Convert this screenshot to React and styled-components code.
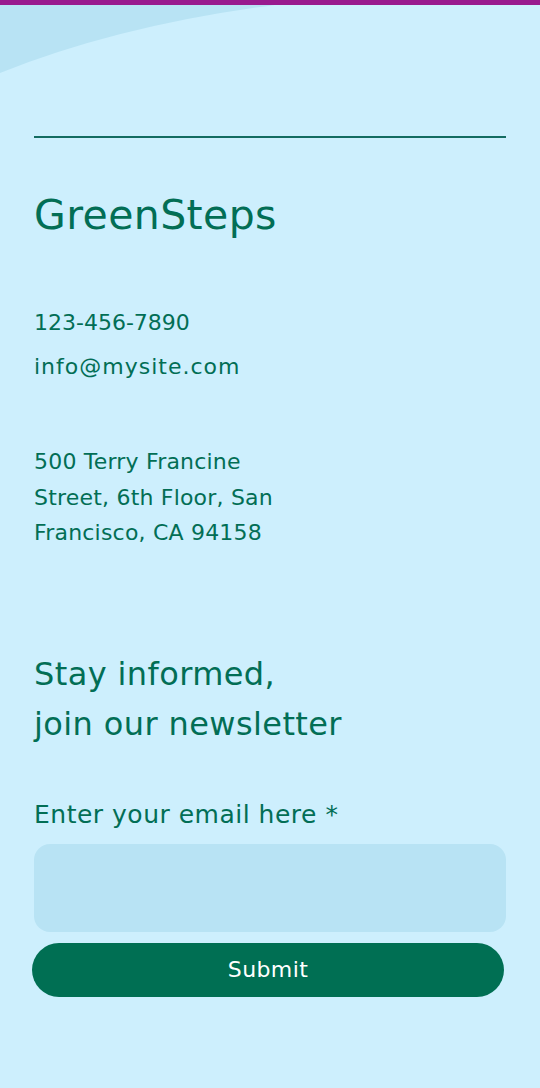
import React from 'react';
import styled, { createGlobalStyle } from 'styled-components';

const Global = createGlobalStyle`
  html, body {
    margin: 0;
    padding: 0;
    background: #cdeffd;
  }
  body {
    font-family: 'DejaVu Sans', 'Noto Sans', sans-serif;
  }
`;

const Page = styled.div`
  position: relative;
  min-height: 1088px;
  background: #cdeffd;
  border-top: 5px solid #991a8e;
  box-sizing: border-box;
  overflow: hidden;
`;

const Swoosh = styled.svg`
  position: absolute;
  top: 0;
  left: 0;
  width: 280px;
  height: 70px;
`;

const Content = styled.div`
  position: relative;
  display: flex;
  flex-direction: column;
  padding: 131px 34px 0 34px;
  color: #026e55;
`;

const Rule = styled.div`
  height: 2px;
  background: #136c61;
`;

const Brand = styled.h1`
  margin: 52px 0 0 0;
  font-size: 41px;
  font-weight: 400;
  line-height: 50px;
  letter-spacing: 0.4px;
`;

const Contact = styled.div`
  display: flex;
  flex-direction: column;
  gap: 14px;
  margin-top: 68px;
  font-size: 22px;
  line-height: 30px;
`;

const ContactLine = styled.span`
  letter-spacing: ${(p) => p.$spacing || 0}px;
`;

const Address = styled.p`
  margin: 62px 0 0 0;
  font-size: 22px;
  line-height: 35.5px;
  letter-spacing: 0.2px;
  width: 262px;
`;

const Heading = styled.h2`
  margin: 98px 0 0 0;
  font-size: 32px;
  font-weight: 400;
  line-height: 50px;
  letter-spacing: 0.4px;
`;

const Form = styled.form`
  display: flex;
  flex-direction: column;
  margin-top: 50px;
`;

const Label = styled.label`
  font-size: 25px;
  line-height: 32px;
  letter-spacing: 0.5px;
  margin-bottom: 13px;
`;

const Input = styled.input`
  height: 88px;
  border: none;
  border-radius: 16px;
  background: #b8e3f4;
  outline: none;
  box-sizing: border-box;
`;

const Button = styled.button`
  margin: 11px 2px 0 -2px;
  height: 54px;
  border: none;
  border-radius: 27px;
  background: #006f53;
  color: #ffffff;
  font-family: inherit;
  font-size: 22px;
  letter-spacing: 0.4px;
`;

export default function App() {
  return (
    <Page>
      <Global />
      <Swoosh viewBox="0 0 280 70" preserveAspectRatio="none">
        <path d="M0 0 H275 Q120 20 0 68 Z" fill="#b8e3f4" />
      </Swoosh>
      <Content>
        <Rule />
        <Brand>GreenSteps</Brand>
        <Contact>
          <ContactLine>123-456-7890</ContactLine>
          <ContactLine $spacing={1}>info@mysite.com</ContactLine>
        </Contact>
        <Address>500 Terry Francine Street, 6th Floor, San Francisco, CA 94158</Address>
        <Heading>
          Stay informed,
          <br />
          join our newsletter
        </Heading>
        <Form onSubmit={(e) => e.preventDefault()}>
          <Label htmlFor="email">Enter your email here *</Label>
          <Input id="email" type="email" />
          <Button type="submit">Submit</Button>
        </Form>
      </Content>
    </Page>
  );
}
